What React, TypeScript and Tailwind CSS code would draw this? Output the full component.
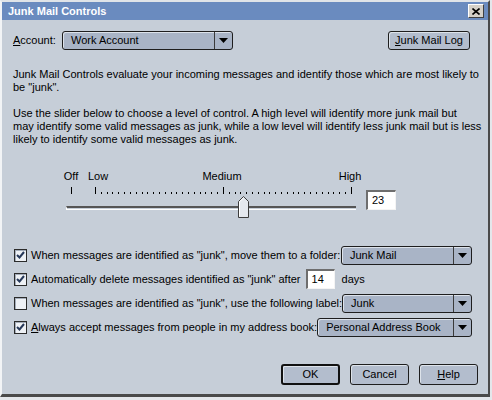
import React from "react";

const Arrow = () => (
  <svg width="9" height="5" viewBox="0 0 9 5">
    <path d="M0 0h9L4.5 5z" fill="#000" />
  </svg>
);

const Select = ({ value, className }: { value: string; className: string }) => (
  <div
    className={`flex h-[19px] items-stretch rounded-[3px] border border-[#1e1e1e] bg-[#a9b4c6] shadow-[inset_1px_1px_0_#dce2ea] ${className}`}
  >
    <span className="flex flex-1 items-center pl-[8px] text-black">{value}</span>
    <span className="flex w-[18px] items-center justify-center border-l border-[#3a3a3a]">
      <Arrow />
    </span>
  </div>
);

const Check = ({ checked }: { checked: boolean }) => (
  <span className="flex h-[13px] w-[13px] shrink-0 items-center justify-center border border-[#2b2b2b] bg-[#eef1f5] shadow-[inset_1px_1px_0_#a4adba]">
    {checked && (
      <svg width="9" height="8" viewBox="0 0 9 8">
        <path d="M1 4l2.5 2.5L8 1" stroke="#27395a" strokeWidth="2" fill="none" />
      </svg>
    )}
  </span>
);

const Btn = ({ children, def }: { children: React.ReactNode; def?: boolean }) => (
  <button
    className={
      def
        ? "flex h-[21px] w-[59px] items-center justify-center rounded-[3px] border-2 border-[#111] bg-[#b3bdcd] shadow-[inset_1px_1px_0_#dde3ea]"
        : "flex h-[21px] w-[59px] items-center justify-center rounded-[3px] border border-[#1e1e1e] bg-[#b3bdcd] shadow-[inset_1px_1px_0_#dde3ea]"
    }
  >
    {children}
  </button>
);

const Field = ({ value, className }: { value: string; className: string }) => (
  <span
    className={`flex items-center border-l-2 border-t-2 border-b border-r border-l-[#6e6e6e] border-t-[#6e6e6e] border-b-[#f4f4f4] border-r-[#f4f4f4] bg-white pl-[4px] ${className}`}
  >
    {value}
  </span>
);

const ticks = Array.from({ length: 45 }, (_, i) => i);

export default function App() {
  return (
    <div className="h-[400px] w-[492px] bg-[#e4e7eb] font-['Liberation_Sans',Arial,sans-serif] text-[11px] leading-[13px] text-black">
      <div className="flex h-[397px] w-[490px] flex-col border-b-[3px] border-l-2 border-r-2 border-t-2 border-b-[#4a4a4a] border-l-[#f2f4f6] border-r-[#4a4a4a] border-t-[#e0e4e8] bg-[#c6ced8]">
        {/* title bar */}
        <div className="flex h-[18px] items-center justify-between bg-[#6a8bbf] pl-[6px] pr-[4px]">
          <span className="text-[11px] font-bold text-white">Junk Mail Controls</span>
          <span className="flex h-[14px] w-[16px] items-center justify-center border-b border-l border-r border-t border-b-[#404040] border-l-white border-r-[#404040] border-t-white bg-[#d4d0c8]">
            <svg width="8" height="7" viewBox="0 0 8 7">
              <path d="M0.5 0.5l7 6M7.5 0.5l-7 6" stroke="#000" strokeWidth="1.6" />
            </svg>
          </span>
        </div>

        <div className="flex flex-1 flex-col pl-[11px] pr-[16px]">
          {/* account row */}
          <div className="mt-[11px] flex h-[19px] items-center">
            <span className="w-[49px]">
              <span className="underline">A</span>ccount:
            </span>
            <Select value="Work Account" className="w-[171px]" />
            <button className="ml-auto mr-[2px] flex h-[19px] w-[82px] items-center justify-center rounded-[3px] border border-[#1e1e1e] bg-[#b3bdcd] shadow-[inset_1px_1px_0_#dde3ea]">
              <span className="underline">J</span>unk Mail Log
            </button>
          </div>

          <p className="mt-[18px] whitespace-nowrap">
            Junk Mail Controls evaluate your incoming messages and identify those which are most likely to
            <br />
            be "junk".
          </p>
          <p className="mt-[13px] whitespace-nowrap">
            Use the slider below to choose a level of control. A high level will identify more junk mail but
            <br />
            may identify some valid messages as junk, while a low level will identify less junk mail but is less
            <br />
            likely to identify some valid messages as junk.
          </p>

          {/* slider */}
          <div className="mt-[24px] flex">
            <div className="relative ml-[47px] h-[48px] w-[300px]">
              <span className="absolute left-[11px] top-0 -translate-x-1/2">Off</span>
              <span className="absolute left-[38px] top-0 -translate-x-1/2">Low</span>
              <span className="absolute left-[162px] top-0 -translate-x-1/2">Medium</span>
              <span className="absolute left-[290px] top-0 -translate-x-1/2">High</span>
              <span className="absolute left-[11px] top-[17px] h-[7px] w-px bg-black" />
              <div className="absolute left-[35px] top-[17px] flex h-[7px] w-[257px] items-end justify-between">
                {ticks.map((i) => (
                  <span
                    key={i}
                    className={i === 0 || i === 22 || i === 44 ? "h-[7px] w-px bg-black" : "h-[2px] w-px bg-black"}
                  />
                ))}
              </div>
              <div className="absolute left-[6px] top-[36px] h-[4px] w-[290px] border-b border-l border-t-2 border-b-white border-l-white border-t-[#555]" />
              <svg className="absolute left-[178px] top-[26px]" width="11" height="22" viewBox="0 0 11 22">
                <path d="M0.5 21.5V5.5L5.5 0.5L10.5 5.5V21.5Z" fill="#e4e8ee" stroke="#3c3c3c" />
                <path d="M1.5 20.5V5.9L5.5 1.9" fill="none" stroke="#fff" />
              </svg>
            </div>
            <Field value="23" className="ml-[6px] mt-[20px] h-[20px] w-[30px]" />
          </div>

          {/* options */}
          <div className="mt-[27px] flex flex-col gap-[4px] pl-[1px]">
            <div className="flex h-[20px] items-center">
              <Check checked />
              <span className="ml-[4px] whitespace-nowrap">
                When messages are identified as "junk", move them to a folder:
              </span>
              <Select value="Junk Mail" className="ml-auto w-[131px]" />
            </div>
            <div className="flex h-[20px] items-center">
              <Check checked />
              <span className="ml-[4px] whitespace-nowrap">
                Automatically delete messages identified as "junk" after
              </span>
              <Field value="14" className="ml-[5px] h-[20px] w-[29px]" />
              <span className="ml-[7px]">days</span>
            </div>
            <div className="flex h-[20px] items-center">
              <Check checked={false} />
              <span className="ml-[4px] whitespace-nowrap">
                When messages are identified as "junk", use the following label:
              </span>
              <Select value="Junk" className="ml-auto w-[131px]" />
            </div>
            <div className="flex h-[20px] items-center">
              <Check checked />
              <span className="ml-[4px] whitespace-nowrap">
                <span className="underline">A</span>lways accept messages from people in my address book:
              </span>
              <Select value="Personal Address Book" className="ml-auto w-[160px]" />
            </div>
          </div>

          {/* buttons */}
          <div className="-mr-[6px] mb-[9px] mt-auto flex justify-end gap-[10px]">
            <Btn def>OK</Btn>
            <Btn>Cancel</Btn>
            <Btn>
              <span className="underline">H</span>elp
            </Btn>
          </div>
        </div>
      </div>
    </div>
  );
}
